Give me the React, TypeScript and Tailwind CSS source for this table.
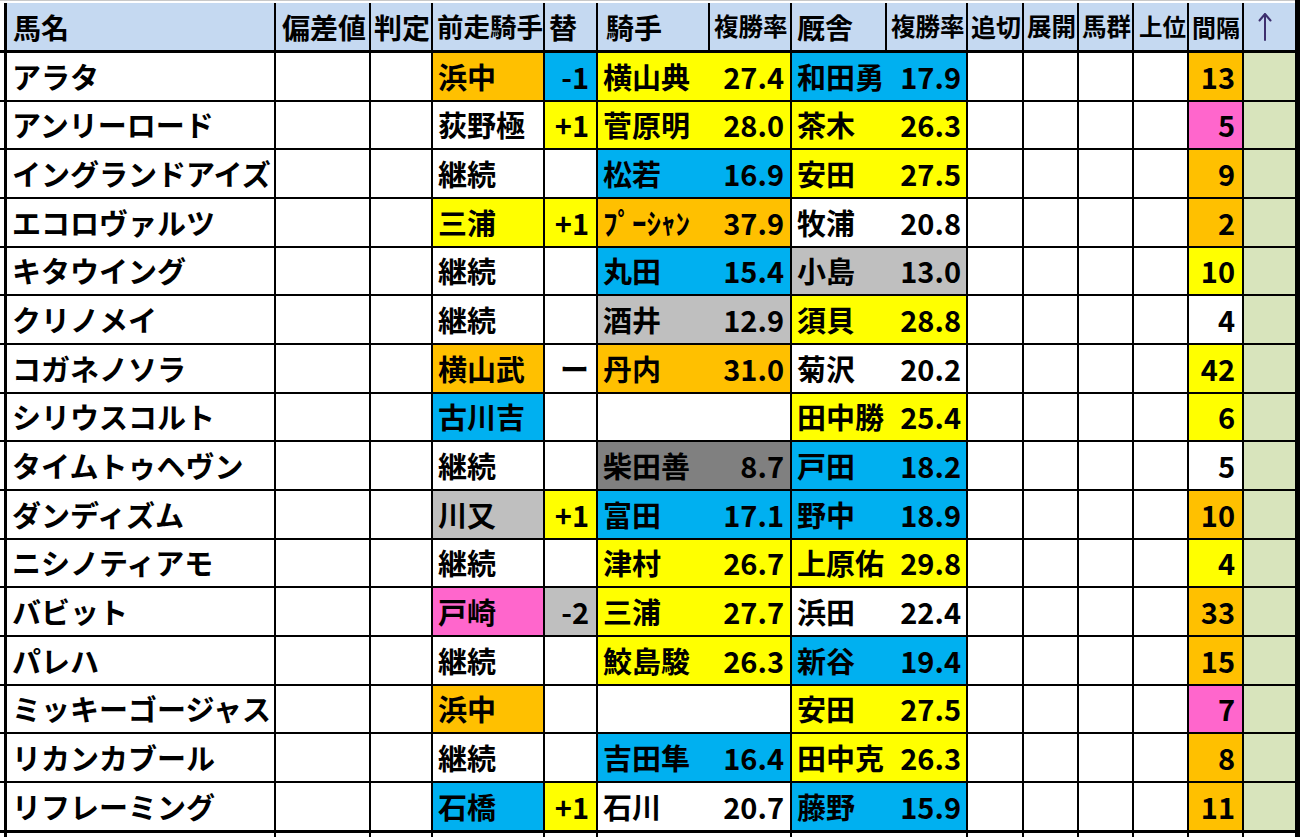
import React from "react";

const COLS =
  "grid grid-cols-[4px_268px_93px_60px_110px_51px_110px_80px_93px_79px_54px_53px_53px_53px_53px_51px] gap-x-[2px]";

const BG: Record<string, string> = {
  O: "bg-[#ffc000]",
  Y: "bg-[#ffff00]",
  B: "bg-[#00b0f0]",
  P: "bg-[#ff66cc]",
  G: "bg-[#bfbfbf]",
  D: "bg-[#808080]",
  W: "bg-white",
};

type Row = {
  name: string;
  prev: [string, string];
  kae: [string, string];
  jockey: [string, string, string];
  trainer: [string, string, string];
  interval: [string, string];
};

const rows: Row[] = [
  { name: "アラタ", prev: ["浜中", "O"], kae: ["-1", "B"], jockey: ["横山典", "27.4", "Y"], trainer: ["和田勇", "17.9", "B"], interval: ["13", "O"] },
  { name: "アンリーロード", prev: ["荻野極", "W"], kae: ["+1", "Y"], jockey: ["菅原明", "28.0", "Y"], trainer: ["茶木", "26.3", "Y"], interval: ["5", "P"] },
  { name: "イングランドアイズ", prev: ["継続", "W"], kae: ["", "W"], jockey: ["松若", "16.9", "B"], trainer: ["安田", "27.5", "Y"], interval: ["9", "O"] },
  { name: "エコロヴァルツ", prev: ["三浦", "Y"], kae: ["+1", "Y"], jockey: ["ﾌﾟｰｼｬﾝ", "37.9", "O"], trainer: ["牧浦", "20.8", "W"], interval: ["2", "O"] },
  { name: "キタウイング", prev: ["継続", "W"], kae: ["", "W"], jockey: ["丸田", "15.4", "B"], trainer: ["小島", "13.0", "G"], interval: ["10", "Y"] },
  { name: "クリノメイ", prev: ["継続", "W"], kae: ["", "W"], jockey: ["酒井", "12.9", "G"], trainer: ["須貝", "28.8", "Y"], interval: ["4", "W"] },
  { name: "コガネノソラ", prev: ["横山武", "O"], kae: ["ー", "W"], jockey: ["丹内", "31.0", "O"], trainer: ["菊沢", "20.2", "W"], interval: ["42", "Y"] },
  { name: "シリウスコルト", prev: ["古川吉", "B"], kae: ["", "W"], jockey: ["", "", "W"], trainer: ["田中勝", "25.4", "Y"], interval: ["6", "Y"] },
  { name: "タイムトゥヘヴン", prev: ["継続", "W"], kae: ["", "W"], jockey: ["柴田善", "8.7", "D"], trainer: ["戸田", "18.2", "B"], interval: ["5", "W"] },
  { name: "ダンディズム", prev: ["川又", "G"], kae: ["+1", "Y"], jockey: ["富田", "17.1", "B"], trainer: ["野中", "18.9", "B"], interval: ["10", "O"] },
  { name: "ニシノティアモ", prev: ["継続", "W"], kae: ["", "W"], jockey: ["津村", "26.7", "Y"], trainer: ["上原佑", "29.8", "Y"], interval: ["4", "Y"] },
  { name: "バビット", prev: ["戸崎", "P"], kae: ["-2", "G"], jockey: ["三浦", "27.7", "Y"], trainer: ["浜田", "22.4", "W"], interval: ["33", "O"] },
  { name: "パレハ", prev: ["継続", "W"], kae: ["", "W"], jockey: ["鮫島駿", "26.3", "Y"], trainer: ["新谷", "19.4", "B"], interval: ["15", "O"] },
  { name: "ミッキーゴージャス", prev: ["浜中", "O"], kae: ["", "W"], jockey: ["", "", "W"], trainer: ["安田", "27.5", "Y"], interval: ["7", "P"] },
  { name: "リカンカブール", prev: ["継続", "W"], kae: ["", "W"], jockey: ["吉田隼", "16.4", "B"], trainer: ["田中克", "26.3", "Y"], interval: ["8", "O"] },
  { name: "リフレーミング", prev: ["石橋", "B"], kae: ["+1", "Y"], jockey: ["石川", "20.7", "W"], trainer: ["藤野", "15.9", "B"], interval: ["11", "O"] },
];

const headers: { t: string; cls: string }[] = [
  { t: "馬名", cls: "text-[28px] pl-[6px] border-l border-black" },
  { t: "偏差値", cls: "text-[28px] pl-[6px]" },
  { t: "判定", cls: "text-[28px] pl-[3px]" },
  { t: "前走騎手", cls: "text-[26.5px] pl-[4px]" },
  { t: "替", cls: "text-[28px] pl-[4px]" },
  { t: "騎手", cls: "text-[28px] pl-[8px]" },
  { t: "複勝率", cls: "text-[24.5px] pl-[4px]" },
  { t: "厩舎", cls: "text-[28px] pl-[5px]" },
  { t: "複勝率", cls: "text-[24.5px] pl-[4px]" },
  { t: "追切", cls: "text-[25px] pl-[3px]" },
  { t: "展開", cls: "text-[24.5px] pl-[3px]" },
  { t: "馬群", cls: "text-[24.5px] pl-[3px]" },
  { t: "上位", cls: "text-[23.5px] pl-[5px]" },
  { t: "間隔", cls: "text-[24px] pl-[3px]" },
];

export default function App() {
  return (
    <div className="w-[1300px] h-[837px] overflow-hidden bg-white font-['Noto_Sans_CJK_JP','Noto_Sans',sans-serif] text-black">
      <div className="bg-black pr-[5px]">
        <div className="h-[3px] bg-white border-t border-[#c8c8c8]"></div>
        {/* header */}
        <div className={`${COLS} h-[47px]`}>
          <div className="bg-white"></div>
          {headers.map((h, i) => (
            <div
              key={i}
              className={`bg-[#c5d9f1] flex items-center overflow-hidden whitespace-nowrap font-bold leading-none ${h.cls}`}
            >
              {h.t}
            </div>
          ))}
          <div className="bg-[#c5d9f1] flex items-center justify-center pr-[10px] overflow-hidden">
            <svg width="14" height="30" viewBox="0 0 14 30" aria-hidden="true">
              <path d="M7 2 L7 28 M1.5 8.5 L7 2 L12.5 8.5" fill="none" stroke="#3d2f6e" strokeWidth="2" strokeLinecap="round" strokeLinejoin="round" />
            </svg>
          </div>
        </div>
        {/* body */}
        <div className={`${COLS} mt-[3px] auto-rows-[46.66px] gap-y-[2px] font-bold leading-none text-[29px]`}>
          {rows.map((r, i) => (
            <React.Fragment key={i}>
              <div className="bg-white"></div>
              <div className="bg-white border-l border-black flex items-center pl-[5px] overflow-hidden whitespace-nowrap">
                {r.name}
              </div>
              <div className="bg-white"></div>
              <div className="bg-white"></div>
              <div className={`${BG[r.prev[1]]} flex items-center pl-[5px] whitespace-nowrap`}>{r.prev[0]}</div>
              <div className={`${BG[r.kae[1]]} flex items-center justify-end pr-[7px] whitespace-nowrap`}>{r.kae[0]}</div>
              <div className={`${BG[r.jockey[2]]} col-span-2 flex items-center justify-between pl-[5px] pr-[6px] whitespace-nowrap`}>
                <span>{r.jockey[0]}</span>
                <span>{r.jockey[1]}</span>
              </div>
              <div className={`${BG[r.trainer[2]]} col-span-2 flex items-center justify-between pl-[5px] pr-[5px] whitespace-nowrap`}>
                <span>{r.trainer[0]}</span>
                <span>{r.trainer[1]}</span>
              </div>
              <div className="bg-white"></div>
              <div className="bg-white"></div>
              <div className="bg-white"></div>
              <div className="bg-white"></div>
              <div className={`${BG[r.interval[1]]} flex items-center justify-end pr-[7px]`}>{r.interval[0]}</div>
              <div className="bg-[#d8e4bc]"></div>
            </React.Fragment>
          ))}
        </div>
        {/* partial next row */}
        <div className={`${COLS} mt-[3px] h-[20px]`}>
          <div className="bg-white"></div>
          <div className="bg-white border-l border-black"></div>
          <div className="bg-white"></div>
          <div className="bg-white"></div>
          <div className="bg-white"></div>
          <div className="bg-white"></div>
          <div className="bg-white col-span-2"></div>
          <div className="bg-white col-span-2"></div>
          <div className="bg-white"></div>
          <div className="bg-white"></div>
          <div className="bg-white"></div>
          <div className="bg-white"></div>
          <div className="bg-white"></div>
          <div className="bg-white"></div>
        </div>
      </div>
    </div>
  );
}
